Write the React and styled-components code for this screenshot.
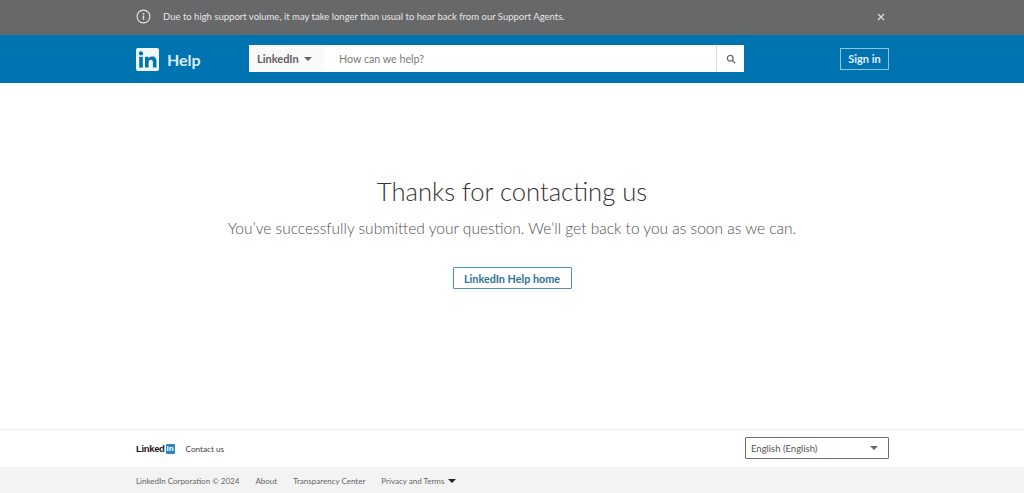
import React from 'react';
import styled, { createGlobalStyle } from 'styled-components';

const GlobalStyle = createGlobalStyle`
  html, body {
    margin: 0;
    padding: 0;
    background: #fff;
    font-family: Lato, "Open Sans", "Liberation Sans", sans-serif;
  }
  * { box-sizing: border-box; }
`;

const Page = styled.div`
  width: 1024px;
  height: 493px;
  display: flex;
  flex-direction: column;
  overflow: hidden;
`;

const Wrap = styled.div`
  width: 753px;
  margin: 0 auto 0 136px;
  display: flex;
  align-items: center;
`;

const Banner = styled.div`
  height: 35px;
  padding-bottom: 2px;
  background: #67686a;
  color: #e6e6e6;
  display: flex;
  align-items: center;
`;

const BannerText = styled.span`
  font-size: 9.5px;
  margin-left: 12px;
  flex: 1;
`;

const CloseSlot = styled.span`
  display: flex;
  margin-right: 4px;
`;

const Header = styled.header`
  height: 48px;
  background: #0073b1;
  display: flex;
  align-items: center;
`;

const HelpLabel = styled.span`
  color: #dcecf5;
  font-size: 16px;
  font-weight: 700;
  margin-left: 8px;
  width: 82px;
`;

const SearchBar = styled.div`
  width: 495px;
  height: 27px;
  margin-top: -1px;
  background: #fff;
  display: flex;
  align-items: center;
`;

const Scope = styled.div`
  width: 75px;
  height: 100%;
  display: flex;
  align-items: center;
  padding-left: 8px;
  gap: 5px;
  font-size: 11px;
  font-weight: 700;
  color: #5e5e5e;
  background: #fafafa;
`;

const Caret = styled.i`
  width: 0;
  height: 0;
  border-left: 4.5px solid transparent;
  border-right: 4.5px solid transparent;
  border-top: 4.5px solid ${p => p.$color || '#666'};
  display: inline-block;
`;

const Query = styled.div`
  flex: 1;
  padding-left: 15px;
  font-size: 10.7px;
  color: #7a7a7a;
`;

const SearchButton = styled.div`
  width: 28px;
  height: 100%;
  border-left: 1px solid #dcdcdc;
  display: flex;
  align-items: center;
  justify-content: center;
`;

const SignIn = styled.div`
  margin-left: auto;
  width: 49px;
  height: 22px;
  margin-top: -1px;
  border: 1px solid #8cc4e4;
  color: #e3f1f9;
  font-size: 11px;
  font-weight: 700;
  display: flex;
  align-items: center;
  justify-content: center;
`;

const Main = styled.main`
  flex: 1;
  display: flex;
  flex-direction: column;
  align-items: center;
  padding-top: 91px;
  border-bottom: 1px solid #ececec;
`;

const Title = styled.h1`
  margin: 0;
  font-size: 25.6px;
  line-height: 34px;
  font-weight: 300;
  color: #333;
`;

const Subtitle = styled.p`
  margin: 9px 0 0;
  font-size: 15.5px;
  line-height: 22px;
  font-weight: 300;
  color: #505050;
`;

const HomeButton = styled.div`
  margin-top: 28px;
  width: 119px;
  height: 22px;
  padding-top: 1px;
  border: 1px solid #4f93b4;
  border-radius: 1px;
  color: #2f7397;
  font-size: 10.8px;
  font-weight: 700;
  display: flex;
  align-items: center;
  justify-content: center;
`;

const FooterTop = styled.div`
  height: 37px;
  display: flex;
  align-items: center;
`;

const Wordmark = styled.span`
  font-family: "Liberation Sans", sans-serif;
  font-weight: 700;
  font-size: 9.5px;
  color: #1a1a1a;
  letter-spacing: -0.35px;
`;

const InBadge = styled.span`
  font-family: "Liberation Sans", sans-serif;
  display: inline-flex;
  align-items: center;
  justify-content: center;
  width: 9px;
  height: 10px;
  margin-left: 1px;
  background: #2a88bd;
  color: #fff;
  font-size: 8px;
  font-weight: 700;
  border-radius: 1px;
`;

const ContactLink = styled.span`
  margin-left: 11px;
  font-size: 8.2px;
  color: #444;
`;

const Language = styled.div`
  margin-left: auto;
  width: 144px;
  height: 22px;
  margin-top: -1px;
  border: 1px solid #6f6f6f;
  border-radius: 1px;
  padding: 0 10px 0 5px;
  display: flex;
  align-items: center;
  justify-content: space-between;
  font-size: 9.5px;
  color: #555;
`;

const FooterBottom = styled.div`
  height: 26px;
  padding-top: 1px;
  background: #f3f3f3;
  display: flex;
  align-items: center;
`;

const LegalRow = styled.div`
  display: flex;
  align-items: center;
  gap: 16px;
  font-size: 8px;
  color: #666;
`;

const LegalItem = styled.span`
  display: inline-flex;
  align-items: center;
  gap: 4px;
`;

const InfoIcon = () => (
  <svg width="15" height="15" viewBox="0 0 15 15" fill="none" stroke="#e8e8e8" strokeWidth="1.1">
    <circle cx="7.5" cy="7.5" r="6.4" />
    <path d="M7.5 6.6v4.2M7.5 4v1.4" strokeWidth="1.3" />
  </svg>
);

const CloseIcon = () => (
  <svg width="8" height="8" viewBox="0 0 8 8" stroke="#dcdcdc" strokeWidth="1.3">
    <path d="M1 1l6 6M7 1L1 7" />
  </svg>
);

const LogoIcon = () => (
  <svg width="23" height="23" viewBox="0 0 23 23">
    <rect width="23" height="23" rx="2" fill="#eef6fa" />
    <rect x="3.2" y="8.8" width="3.6" height="10.8" fill="#0073b1" />
    <circle cx="5" cy="5.4" r="2.1" fill="#0073b1" />
    <path d="M9 8.8h3.4v1.6c.6-1 1.9-1.9 3.7-1.9 3.2 0 4.4 2 4.4 5.2v5.9h-3.6v-5.3c0-1.5-.5-2.6-1.9-2.6-1.5 0-2.4 1-2.4 2.7v5.2H9z" fill="#0073b1" />
  </svg>
);

const SearchIcon = () => (
  <svg width="10" height="10" viewBox="0 0 10 10" fill="none" stroke="#6a6a6a" strokeWidth="1.3">
    <circle cx="4.2" cy="4.2" r="2.9" />
    <path d="M6.4 6.4L9.2 9.2" />
  </svg>
);

export default function App() {
  return (
    <Page>
      <GlobalStyle />
      <Banner>
        <Wrap>
          <InfoIcon />
          <BannerText>Due to high support volume, it may take longer than usual to hear back from our Support Agents.</BannerText>
          <CloseSlot><CloseIcon /></CloseSlot>
        </Wrap>
      </Banner>
      <Header>
        <Wrap>
          <LogoIcon />
          <HelpLabel>Help</HelpLabel>
          <SearchBar>
            <Scope>LinkedIn <Caret /></Scope>
            <Query>How can we help?</Query>
            <SearchButton><SearchIcon /></SearchButton>
          </SearchBar>
          <SignIn>Sign in</SignIn>
        </Wrap>
      </Header>
      <Main>
        <Title>Thanks for contacting us</Title>
        <Subtitle>You’ve successfully submitted your question. We’ll get back to you as soon as we can.</Subtitle>
        <HomeButton>LinkedIn Help home</HomeButton>
      </Main>
      <FooterTop>
        <Wrap>
          <Wordmark>Linked</Wordmark>
          <InBadge>in</InBadge>
          <ContactLink>Contact us</ContactLink>
          <Language>English (English) <Caret /></Language>
        </Wrap>
      </FooterTop>
      <FooterBottom>
        <Wrap>
          <LegalRow>
            <LegalItem>LinkedIn Corporation © 2024</LegalItem>
            <LegalItem>About</LegalItem>
            <LegalItem>Transparency Center</LegalItem>
            <LegalItem>Privacy and Terms <Caret $color="#222" /></LegalItem>
          </LegalRow>
        </Wrap>
      </FooterBottom>
    </Page>
  );
}
